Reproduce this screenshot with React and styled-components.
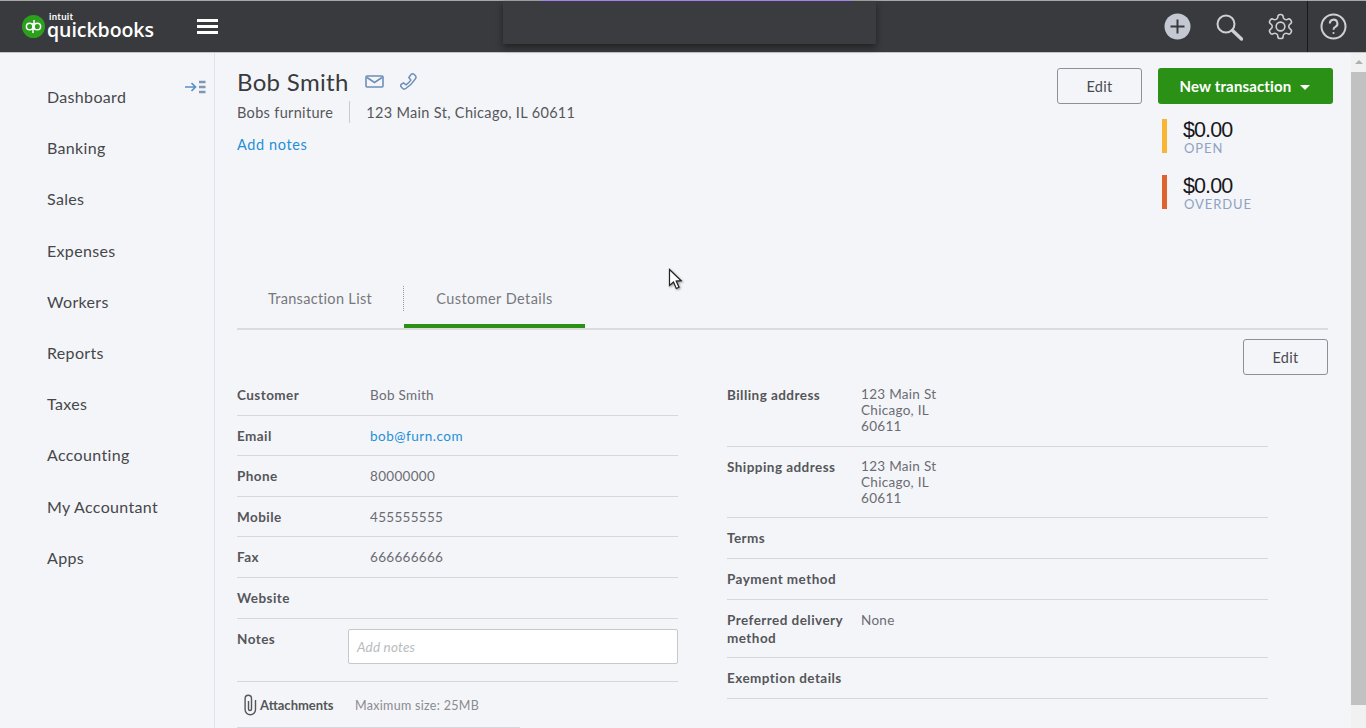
import React from "react";
import styled, { createGlobalStyle } from "styled-components";

const Global = createGlobalStyle`
  html, body { margin: 0; padding: 0; height: 100%; overflow: hidden; background: #f4f5f9; }
  body { font-family: Lato, "Open Sans", "Liberation Sans", sans-serif; color: #393a3d; }
  #root { height: 728px; }
  * { box-sizing: border-box; }
`;

const Page = styled.div`
  position: relative;
  width: 1366px;
  height: 728px;
  display: flex;
  flex-direction: column;
  overflow: hidden;
`;

const Header = styled.header`
  height: 53px;
  flex: none;
  background: #393a3d;
  border-top: 1px solid #a8a8a8;
  border-bottom: 1px solid #c4c4c6;
  display: flex;
  align-items: center;
  padding-left: 22px;
`;
const Logo = styled.div`
  display: flex;
  align-items: center;
  width: 175px;
  gap: 2px;
`;
const LogoText = styled.div`
  display: flex;
  flex-direction: column;
  color: #fff;
  margin-top: -3px;
`;
const LogoSmall = styled.span`
  font-size: 9.5px;
  line-height: 9px;
  font-weight: 700;
  letter-spacing: 0.3px;
  margin-left: 2px;
`;
const LogoBig = styled.span`
  font-family: "Open Sans", sans-serif;
  font-size: 19.5px;
  line-height: 18px;
  font-weight: 600;
  letter-spacing: -0.05px;
`;
const Burger = styled.div`
  width: 21px;
  height: 15px;
  border-top: 3px solid #fff;
  border-bottom: 3px solid #fff;
  display: flex;
  align-items: center;
  &::before { content: ""; width: 100%; height: 3px; background: #fff; }
`;
const HeaderIcons = styled.div`
  margin-left: auto;
  display: flex;
  align-items: center;
  height: 100%;
`;
const HeaderIcon = styled.div`
  width: 52px;
  display: flex;
  justify-content: center;
  align-items: center;
`;
const GearIcon = styled(HeaderIcon)`
  padding-right: 2px;
`;
const HelpCell = styled.div`
  width: 59px;
  height: 100%;
  border-left: 1px solid #18191a;
  display: flex;
  align-items: center;
  padding-left: 12px;
`;
const Overlay = styled.div`
  position: absolute;
  top: 1px;
  left: 503px;
  width: 373px;
  height: 43px;
  background: #3b3c3f;
  box-shadow: 0 3px 7px rgba(0,0,0,.45);
  &::before {
    content: "";
    position: absolute;
    top: -1px;
    left: 38px;
    width: 311px;
    height: 1px;
    background: #a67ff0;
  }
`;

const Body = styled.div`
  flex: 1;
  display: flex;
  min-height: 0;
`;
const Sidebar = styled.nav`
  width: 215px;
  flex: none;
  border-right: 1px solid #dfe3ec;
  padding: 18px 9px 0 47px;
  position: relative;
`;
const Collapse = styled.div`
  position: absolute;
  top: 25px;
  left: 185px;
`;
const NavItem = styled.div`
  height: 51.2px;
  display: flex;
  align-items: center;
  font-size: 16px;
  letter-spacing: 0.33px;
  color: #46474a;
`;

const Main = styled.main`
  flex: 1;
  min-width: 0;
  padding: 15px 18px 0 22px;
`;
const Top = styled.section`
  height: 204px;
  display: flex;
  justify-content: space-between;
`;
const Identity = styled.div`
  display: flex;
  flex-direction: column;
`;
const NameRow = styled.div`
  display: flex;
  align-items: center;
  height: 26px;
  gap: 16px;
`;
const Name = styled.h1`
  margin: 0;
  font-size: 24px;
  font-weight: 400;
  letter-spacing: 0.33px;
  color: #393a3d;
`;
const IconRow = styled.div`
  display: flex;
  align-items: center;
  gap: 15px;
  margin-top: 1px;
`;
const SubRow = styled.div`
  display: flex;
  align-items: center;
  margin-top: 7px;
  font-size: 14.5px;
  letter-spacing: 0.33px;
  color: #56575a;
  height: 22px;
`;
const Pipe = styled.span`
  width: 1px;
  height: 22px;
  background: #c9cacc;
  margin: 0 16px;
`;
const AddNotes = styled.a`
  margin-top: 11px;
  font-size: 14.5px;
  letter-spacing: 0.6px;
  line-height: 22px;
  color: #1f8fd6;
`;
const TopRight = styled.div`
  display: flex;
  gap: 16px;
  align-items: flex-start;
`;
const EditButton = styled.button`
  width: 85px;
  height: 36px;
  flex: none;
  background: transparent;
  border: 1px solid #8d9096;
  border-radius: 3px;
  font: 400 14.5px Lato, sans-serif;
  letter-spacing: 0.3px;
  color: #4a4b4e;
  padding: 0;
`;
const Actions = styled.div`
  width: 175px;
  display: flex;
  flex-direction: column;
`;
const GreenButton = styled.button`
  width: 175px;
  height: 36px;
  background: #2a9116;
  border: 0;
  border-radius: 3px;
  color: #fff;
  font: 700 15px Lato, sans-serif;
  letter-spacing: 0.15px;
  display: flex;
  align-items: center;
  justify-content: center;
  gap: 9px;
  padding: 0 1px 0 0;
`;
const Caret = styled.span`
  width: 0;
  height: 0;
  border-left: 5px solid transparent;
  border-right: 5px solid transparent;
  border-top: 5px solid #fff;
  margin-top: 2px;
`;
const Kpis = styled.div`
  margin: 15px 0 0 4px;
  display: flex;
  flex-direction: column;
  gap: 22px;
`;
const Kpi = styled.div`
  height: 34px;
  border-left: 5px solid ${(p) => p.$color};
  padding-left: 16px;
  display: flex;
  flex-direction: column;
`;
const Amount = styled.span`
  font: 400 21.5px/22px "Liberation Sans", sans-serif;
  letter-spacing: -0.9px;
  color: #17181a;
`;
const KpiLabel = styled.span`
  font-size: 13px;
  line-height: 14px;
  letter-spacing: 0.9px;
  color: #8ea3c1;
  margin-left: 1px;
`;

const Tabs = styled.div`
  height: 58px;
  display: flex;
  border-bottom: 2px solid #dcdcdc;
  margin-right: 5px;
`;
const Tab = styled.div`
  height: 56px;
  flex: none;
  width: ${(p) => p.$w}px;
  padding: 18px 0 0;
  text-align: center;
  font-size: 14.5px;
  letter-spacing: ${(p) => (p.$active ? 0.42 : 0.33)}px;
  color: #77787b;
  border-bottom: ${(p) => (p.$active ? "4px solid #2a9116" : "0")};
`;
const TabDivider = styled.span`
  align-self: flex-start;
  width: 0;
  height: 25px;
  margin-top: 14px;
  border-left: 1px dotted #9a9a9a;
`;
const EditRow = styled.div`
  display: flex;
  justify-content: flex-end;
  margin: 9px 5px 0 0;
`;
const Columns = styled.div`
  display: flex;
  gap: 49px;
`;
const Column = styled.div`
  width: ${(p) => p.$w}px;
  flex: none;
`;
const Row = styled.div`
  display: grid;
  grid-template-columns: 133px 1fr;
  height: 40.6px;
  border-bottom: 1px solid #d4d7dc;
  padding-top: 12px;
  font-size: 13.5px;
  line-height: 16px;
`;
const SideRow = styled(Row)`
  grid-template-columns: 134px 1fr;
  height: ${(p) => p.$h || 41}px;
`;
const Label = styled.div`
  font-weight: 700;
  color: #55565a;
  letter-spacing: 0.45px;
`;
const TallLabel = styled(Label)`
  line-height: 18px;
  margin-top: -1px;
`;
const Value = styled.div`
  color: #6b6c72;
  letter-spacing: 0.3px;
`;
const AddressValue = styled(Value)`
  margin-top: -1px;
`;
const Link = styled.a`
  color: #1f8fd6;
  letter-spacing: 0.5px;
`;
const NotesRow = styled.div`
  display: flex;
  height: 63px;
  border-bottom: 1px solid #d4d7dc;
  padding-top: 12px;
  font-size: 13.5px;
  line-height: 16px;
`;
const NotesLabel = styled(Label)`
  width: 111px;
  flex: none;
`;
const NotesInput = styled.div`
  flex: 1;
  height: 35px;
  margin-top: -2px;
  background: #fff;
  border: 1px solid #c6c8cc;
  border-radius: 2px;
  padding: 9px 8px;
  font-style: italic;
  color: #b9bbbe;
  letter-spacing: 0.2px;
`;
const AttachRow = styled.div`
  width: 283px;
  height: 46px;
  border-bottom: 1px solid #d4d7dc;
  display: flex;
  align-items: center;
  padding: 2px 0 0 5px;
  font-size: 13px;
`;
const AttachLabel = styled.span`
  font-weight: 700;
  color: #55565a;
  letter-spacing: 0;
  margin-left: 2px;
  width: 95px;
  flex: none;
`;
const AttachHint = styled.span`
  color: #8a8b8f;
  font-size: 12.5px;
  letter-spacing: 0.3px;
`;

const Scrollbar = styled.div`
  width: 15px;
  flex: none;
  background: #f1f1f1;
  display: flex;
  flex-direction: column;
  align-items: center;
`;
const ScrollUp = styled.span`
  margin-top: 7px;
  width: 0;
  height: 0;
  border-left: 4px solid transparent;
  border-right: 4px solid transparent;
  border-bottom: 4px solid #b0b0b0;
`;
const ScrollThumb = styled.div`
  width: 15px;
  height: 633px;
  margin-top: 8px;
  background: #c1c1c1;
`;
const Cursor = styled.svg`
  position: absolute;
  left: 668px;
  top: 268px;
  filter: drop-shadow(1px 1px 1px rgba(0,0,0,.4));
`;

const nav = ["Dashboard","Banking","Sales","Expenses","Workers","Reports","Taxes","Accounting","My Accountant","Apps"];

export default function App() {
  return (
    <Page>
      <Global />
      <Header>
        <Logo>
          <svg width="23" height="23" viewBox="0 0 23 23">
            <circle cx="11.500" cy="11.500" r="11.500" fill="#2ca01c" />
            <g fill="none" stroke="#fff" strokeWidth="1.500">
              <circle cx="7.700" cy="11.500" r="3.300" />
              <path d="M11 8v10" />
              <circle cx="15.300" cy="11.500" r="3.300" />
              <path d="M12 5v10" />
            </g>
          </svg>
          <LogoText>
            <LogoSmall>intuit</LogoSmall>
            <LogoBig>quickbooks</LogoBig>
          </LogoText>
        </Logo>
        <Burger />
        <HeaderIcons>
          <HeaderIcon>
            <svg width="27" height="27" viewBox="0 0 27 27">
              <circle cx="13.500" cy="13.500" r="13" fill="#c4c8d2" />
              <path d="M13.500 6.500v14M6.500 13.500h14" stroke="#393a3d" strokeWidth="2" />
            </svg>
          </HeaderIcon>
          <HeaderIcon>
            <svg width="28" height="28" viewBox="0 0 28 28" fill="none" stroke="#cfd0d3">
              <circle cx="11" cy="11" r="8.500" strokeWidth="2" />
              <path d="M17.500 17.500l9 8.500" strokeWidth="3.400" strokeLinecap="round" />
            </svg>
          </HeaderIcon>
          <GearIcon>
            <svg width="29" height="29" viewBox="0 0 24 24" fill="none" stroke="#cfd0d3" strokeWidth="1.300">
              <path d="M12.220 2h-.44a2 2 0 0 0-2 2v.18a2 2 0 0 1-1 1.730l-.43.25a2 2 0 0 1-2 0l-.15-.08a2 2 0 0 0-2.730.73l-.22.38a2 2 0 0 0 .73 2.730l.15.1a2 2 0 0 1 1 1.720v.51a2 2 0 0 1-1 1.740l-.15.09a2 2 0 0 0-.73 2.730l.22.38a2 2 0 0 0 2.730.73l.15-.08a2 2 0 0 1 2 0l.43.25a2 2 0 0 1 1 1.730V20a2 2 0 0 0 2 2h.44a2 2 0 0 0 2-2v-.18a2 2 0 0 1 1-1.730l.43-.25a2 2 0 0 1 2 0l.15.08a2 2 0 0 0 2.730-.73l.22-.39a2 2 0 0 0-.73-2.730l-.15-.08a2 2 0 0 1-1-1.740v-.5a2 2 0 0 1 1-1.740l.15-.09a2 2 0 0 0 .73-2.730l-.22-.38a2 2 0 0 0-2.730-.73l-.15.08a2 2 0 0 1-2 0l-.43-.25a2 2 0 0 1-1-1.730V4a2 2 0 0 0-2-2z" />
              <circle cx="12" cy="12" r="3.600" />
            </svg>
          </GearIcon>
          <HelpCell>
            <svg width="27" height="27" viewBox="0 0 27 27" fill="none" stroke="#cfd0d3" strokeWidth="2">
              <circle cx="13.500" cy="13.500" r="12" />
              <path d="M9.800 10.500a3.800 3.800 0 1 1 5.600 3.300c-1.300.7-1.900 1.400-1.900 2.900" />
              <circle cx="13.500" cy="20" r="1.100" fill="#cfd0d3" stroke="none" />
            </svg>
          </HelpCell>
        </HeaderIcons>
      </Header>
      <Overlay />
      <Body>
        <Sidebar>
          <Collapse>
            <svg width="21" height="14" viewBox="0 0 21 14" fill="none">
              <path d="M0 7h10M6.500 3l4 4-4 4" stroke="#5b8fc4" strokeWidth="1.700" />
              <path d="M14 2h6.500M14 7h6.500M14 12h6.500" stroke="#7f96b4" strokeWidth="2.400" />
            </svg>
          </Collapse>
          {nav.map((n) => <NavItem key={n}>{n}</NavItem>)}
        </Sidebar>
        <Main>
          <Top>
            <Identity>
              <NameRow>
                <Name>Bob Smith</Name>
                <IconRow>
                  <svg width="19" height="13" viewBox="0 0 19 13" fill="none" stroke="#6d8fb8" strokeWidth="1.600">
                    <rect x="1" y="1" width="17" height="11" rx="1" />
                    <path d="M2 2.500l7.500 5 7.500-5" />
                  </svg>
                  <svg width="19" height="19" viewBox="0 0 19 19" fill="none" stroke="#6d8fb8" strokeWidth="1.500">
                    <path d="M12 2.500c1-1 2.200-1 3.200 0l1 1c1 1 1 2.200.2 3.300C13.600 11 10.800 13.800 6.800 16.500c-1.100.8-2.300.8-3.300-.2l-1-1c-1-1-1-2.200 0-3.200l2-1.300 2.600 2c1.800-1.300 3.400-2.900 4.700-4.700l-2-2.600z" />
                  </svg>
                </IconRow>
              </NameRow>
              <SubRow>
                Bobs furniture
                <Pipe />
                123 Main St, Chicago, IL 60611
              </SubRow>
              <AddNotes>Add notes</AddNotes>
            </Identity>
            <TopRight>
              <EditButton>Edit</EditButton>
              <Actions>
                <GreenButton>New transaction <Caret /></GreenButton>
                <Kpis>
                  <Kpi $color="#fbb534"><Amount>$0.00</Amount><KpiLabel>OPEN</KpiLabel></Kpi>
                  <Kpi $color="#e0622f"><Amount>$0.00</Amount><KpiLabel>OVERDUE</KpiLabel></Kpi>
                </Kpis>
              </Actions>
            </TopRight>
          </Top>
          <Tabs>
            <Tab $w={166}>Transaction List</Tab>
            <TabDivider />
            <Tab $w={181} $active>Customer Details</Tab>
          </Tabs>
          <EditRow><EditButton>Edit</EditButton></EditRow>
          <Columns>
            <Column $w={441}>
              <Row><Label>Customer</Label><Value>Bob Smith</Value></Row>
              <Row><Label>Email</Label><Link>bob@furn.com</Link></Row>
              <Row><Label>Phone</Label><Value>80000000</Value></Row>
              <Row><Label>Mobile</Label><Value>455555555</Value></Row>
              <Row><Label>Fax</Label><Value>666666666</Value></Row>
              <Row><Label>Website</Label><Value /></Row>
              <NotesRow><NotesLabel>Notes</NotesLabel><NotesInput>Add notes</NotesInput></NotesRow>
              <AttachRow>
                <svg width="16" height="22" viewBox="0 0 16 22" fill="none" stroke="#55565a" strokeWidth="1.400">
                  <path d="M13.500 6v9.500a5.200 5.200 0 0 1-10.400 0V4.500a3.200 3.200 0 0 1 6.400 0V15a1.500 1.500 0 0 1-3 0V7" />
                </svg>
                <AttachLabel>Attachments</AttachLabel>
                <AttachHint>Maximum size: 25MB</AttachHint>
              </AttachRow>
            </Column>
            <Column $w={541}>
              <SideRow $h={72}><Label>Billing address</Label><AddressValue>123 Main St<br />Chicago, IL<br />60611</AddressValue></SideRow>
              <SideRow $h={71}><Label>Shipping address</Label><AddressValue>123 Main St<br />Chicago, IL<br />60611</AddressValue></SideRow>
              <SideRow><Label>Terms</Label><Value /></SideRow>
              <SideRow><Label>Payment method</Label><Value /></SideRow>
              <SideRow $h={58}><TallLabel>Preferred delivery<br />method</TallLabel><Value>None</Value></SideRow>
              <SideRow><Label>Exemption details</Label><Value /></SideRow>
            </Column>
          </Columns>
        </Main>
        <Scrollbar>
          <ScrollUp />
          <ScrollThumb />
        </Scrollbar>
      </Body>
      <Cursor width="16" height="24" viewBox="0 0 16 24">
        <path d="M1.500 1.500v16l4-3.500 2.800 6.500 2.700-1.200-2.800-6.200 5-.4z" fill="#fff" stroke="#222" strokeWidth="1.200" />
      </Cursor>
    </Page>
  );
}
